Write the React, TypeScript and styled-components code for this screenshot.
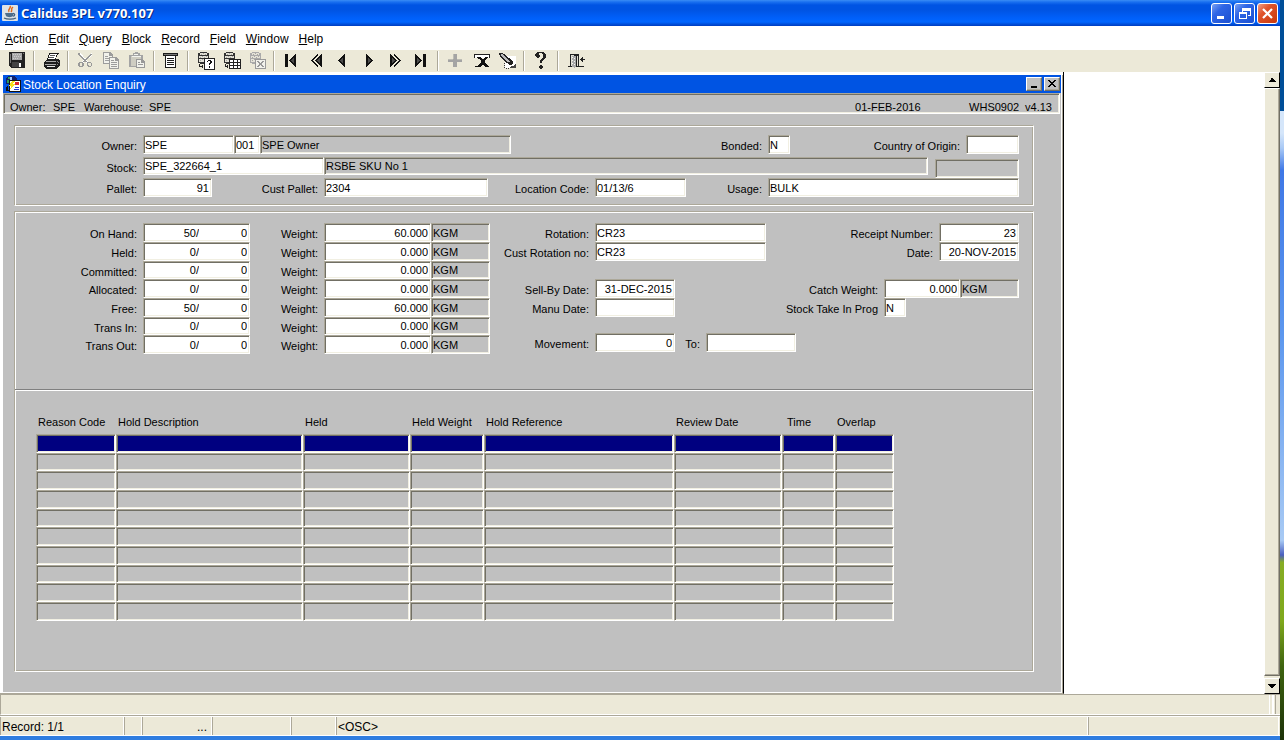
import React from "react";
import styled, { createGlobalStyle } from "styled-components";

const GlobalStyle = createGlobalStyle`
  *, *::before, *::after { box-sizing: border-box; }
  html, body { margin: 0; padding: 0; }
  body {
    font-family: "Liberation Sans", Arial, sans-serif;
    font-size: 11px;
    line-height: 14px;
    color: #000;
    background: #fff;
  }
  button, input { font: inherit; color: inherit; margin: 0; border-radius: 0; }
`;

/* ---------- shell ---------- */

const Screen = styled.div`
  display: flex;
  min-height: 100vh;
`;

const AppFrame = styled.div`
  flex: 1;
  min-width: 0;
  display: flex;
  flex-direction: column;
  border-bottom: 4px solid #2f7de0;
`;

const Desktop = styled.div`
  width: 4px;
  background: linear-gradient(
    #004e98 0 15%,
    #d5e6fa 15% 18%,
    #a9c9f5 20%,
    #3f78e6 23%,
    #5c97ee 45%,
    #a8caf4 73%,
    #4a5fc0 75%,
    #86ad24 76%,
    #7fa81c 84%,
    #3f6410 90%,
    #1c3208
  );
`;

const TitleBar = styled.header`
  display: flex;
  align-items: center;
  height: 26px;
  padding: 0 2px;
  background: linear-gradient(#3a8df5 0, #1a70f0 2px, #0054e3 5px, #0054e3 10px, #0060fa 18px, #0066ff 22px, #0050dc 24px, #003dc0 26px);
`;

const AppTitle = styled.h1`
  flex: 1;
  margin: 0 0 0 3px;
  font: bold 13px/20px "Noto Sans", "Open Sans", sans-serif;
  color: #fff;
  text-shadow: 1px 1px 0 #0a2a80;
`;

const CaptionButtons = styled.div`
  display: flex;
  gap: 2px;
`;

const CaptionButton = styled.button<{ $danger?: boolean }>`
  width: 21px;
  height: 21px;
  padding: 0;
  display: grid;
  place-items: center;
  border: 1px solid #fff;
  border-radius: 3px;
  background: ${(p) =>
    p.$danger
      ? "linear-gradient(135deg, #f0a088, #e0542c 35%, #c8380c)"
      : "linear-gradient(135deg, #7ba2f2, #2f66e6 35%, #1b4fd0)"};
`;

const MenuBar = styled.nav`
  display: flex;
  gap: 10px;
  height: 24px;
  padding: 0 5px;
  align-items: center;
  background: #fff;
`;

const MenuItem = styled.button`
  padding: 2px 0 0;
  border: 0;
  background: none;
  font-size: 12px;
  line-height: 16px;
  &::first-letter { text-decoration: underline; }
`;

const ToolBar = styled.div`
  display: flex;
  align-items: center;
  height: 22px;
  padding-left: 4px;
  background: #ece9d8;
`;

const ToolButton = styled.button`
  width: 26px;
  height: 22px;
  padding: 0;
  display: grid;
  place-items: center;
  border: 0;
  background: none;
`;

const ToolSeparator = styled.span`
  width: 8px;
  height: 20px;
  display: flex;
  justify-content: center;
  &::before {
    content: "";
    width: 2px;
    border-left: 1px solid #aca899;
    border-right: 1px solid #fff;
  }
`;

const Workspace = styled.main`
  flex: 1;
  display: grid;
  grid-template-columns: minmax(0, 1fr) 200px 16px;
  background: #fff;
`;

const ScrollBar = styled.div`
  grid-column: 3;
  display: flex;
  flex-direction: column;
  background: #ece9d8;
`;

const ScrollButton = styled.button`
  width: 16px;
  height: 16px;
  padding: 0;
  display: grid;
  place-items: center;
  background: #ece9d8;
  border: 1px solid #fff;
  border-right-color: #000;
  border-bottom-color: #000;
`;

const ScrollThumb = styled.div`
  flex: 1;
  margin-bottom: 2px;
  border: 1px solid #fff;
  border-right: 1px solid #716f64;
  border-bottom: 1px solid #716f64;
  box-shadow: inset -1px -1px #aca899;
`;

/* ---------- inner window ---------- */

const ChildWindow = styled.section`
  display: flex;
  flex-direction: column;
  padding: 3px 0 0 3px;
  border-right: 1px solid #000;
  border-bottom: 1px solid #aca899;
  background: #fff;
`;

const ChildBody = styled.div`
  flex: 1;
  display: flex;
  flex-direction: column;
  background: #c0c0c0;
  border-right: 1px solid #fff;
  border-bottom: 1px solid #fff;
  box-shadow: 1px 0 #aca899;
  margin-right: 1px;
`;

const ChildTitle = styled.div`
  display: flex;
  align-items: center;
  gap: 2px;
  height: 18px;
  padding: 0 1px 0 2px;
  background: #0054e3;
  color: #fff;
`;

const ChildHeading = styled.h2`
  flex: 1;
  margin: 0;
  padding-top: 2px;
  font-size: 12px;
  font-weight: normal;
  line-height: 16px;
`;

const ChildButton = styled.button`
  width: 16px;
  height: 14px;
  padding: 0;
  display: grid;
  place-items: center;
  background: #c0c0c0;
  border: 1px solid #fff;
  border-right-color: #716f64;
  border-bottom-color: #716f64;
  box-shadow: inset -1px -1px #aca899;
`;

const InfoBar = styled.div`
  display: flex;
  height: 21px;
  padding: 5px 7px 0 6px;
  margin-right: 1px;
  border: 1px solid #aca899;
  border-right-color: #fff;
  border-bottom-color: #fff;
  box-shadow: inset 1px 1px #716f64, inset -1px -1px #f1efe2;
  line-height: 16px;
  white-space: nowrap;
`;

const InfoText = styled.span<{ $width?: number; $end?: boolean }>`
  ${(p) => p.$width && `width: ${p.$width}px;`}
  ${(p) => p.$end && "margin-left: auto;"}
`;

const Canvas = styled.form`
  flex: 1;
  display: flex;
  flex-direction: column;
  gap: 5px;
  padding: 11px 27px 20px 11px;
`;

const Group = styled.fieldset<{ $grow?: boolean }>`
  min-width: 0;
  margin: 0;
  padding: 0;
  border: 1px solid #aca899;
  border-right-color: #fff;
  border-bottom-color: #fff;
  box-shadow: inset 1px 1px #fff, inset -1px -1px #aca899;
  ${(p) => p.$grow && "flex: 1;"}
`;

const StockPane = styled.div`
  padding: 9px 14px 8px 1px;
`;

const DetailPane = styled.div`
  display: flex;
  align-items: flex-start;
  padding: 11px 14px 35px 1px;
`;

const Rule = styled.hr`
  margin: 0;
  border: 0;
  border-top: 1px solid #808080;
  border-bottom: 1px solid #fff;
`;

const Row = styled.div<{ $height?: number }>`
  display: flex;
  align-items: flex-start;
  height: ${(p) => p.$height ?? 19}px;
`;

const RightCell = styled.div<{ $width: number; $low?: boolean }>`
  display: flex;
  flex: none;
  width: ${(p) => p.$width}px;
  margin-left: ${(p) => (p.$low ? "7px" : "0")};
  align-self: ${(p) => (p.$low ? "flex-end" : "auto")};
`;

const Label = styled.label<{ $width?: number }>`
  flex: ${(p) => (p.$width ? "none" : "1")};
  width: ${(p) => (p.$width ? p.$width + "px" : "auto")};
  padding: 4px 6px 0 0;
  text-align: right;
  white-space: nowrap;
`;

const Field = styled.input<{ $width?: number; $right?: boolean; $height?: number }>`
  flex: ${(p) => (p.$width ? "none" : "1")};
  width: ${(p) => (p.$width ? p.$width + "px" : "auto")};
  min-width: 0;
  height: ${(p) => p.$height ?? 19}px;
  padding: 1px 2px 1px 1px;
  text-align: ${(p) => (p.$right ? "right" : "left")};
  background: #fff;
  border: 1px solid #aca899;
  border-right-color: #fff;
  border-bottom-color: #fff;
  box-shadow: inset 1px 1px #716f64, inset -1px -1px #f1efe2;
  outline: none;
  &:read-only { background: #c0c0c0; }
`;

const SplitField = styled.span<{ $height: number }>`
  display: flex;
  width: 107px;
  height: ${(p) => p.$height}px;
  padding: 1px 2px 1px 1px;
  background: #fff;
  border: 1px solid #aca899;
  border-right-color: #fff;
  border-bottom-color: #fff;
  box-shadow: inset 1px 1px #716f64, inset -1px -1px #f1efe2;
`;

const SplitInput = styled.input<{ $width?: number }>`
  flex: ${(p) => (p.$width ? "none" : "1")};
  width: ${(p) => (p.$width ? p.$width + "px" : "auto")};
  min-width: 0;
  padding: 0;
  border: 0;
  background: none;
  text-align: right;
  outline: none;
`;

const Balances = styled.div`
  flex: none;
`;

const Details = styled.div`
  flex: 1;
`;

const HoldPane = styled.div`
  padding: 24px 0 0 21px;
`;

const HoldTable = styled.table`
  border-collapse: separate;
  border-spacing: 0;
  table-layout: fixed;
  width: 858px;
`;

const HoldHead = styled.th<{ $width: number; $indent?: number }>`
  width: ${(p) => p.$width}px;
  height: 19px;
  padding: 0 0 5px ${(p) => p.$indent ?? 2}px;
  font-weight: normal;
  text-align: left;
  white-space: nowrap;
`;

const HoldCell = styled.td<{ $current: boolean; $height: number }>`
  height: ${(p) => p.$height}px;
  padding: 0;
  background: ${(p) => (p.$current ? "#000080" : "#c0c0c0")};
  border: 1px solid #aca899;
  border-right-color: #fff;
  border-bottom-color: #fff;
  box-shadow: inset 1px 1px #716f64, inset -1px -1px #f1efe2;
`;

/* ---------- footer ---------- */

const MessageBar = styled.div`
  display: flex;
  height: 21px;
  padding-right: 4px;
  background: #ece9d8;
  border-top: 1px solid #aca899;
  border-left: 1px solid #aca899;
  border-bottom: 1px solid #fff;
`;

const MessageText = styled.output`
  flex: 1;
  margin-right: 2px;
  border-right: 1px solid #fff;
`;

const MessageGrip = styled.span`
  width: 4px;
  border-left: 2px solid #fff;
  border-right: 1px solid #aca899;
`;

const StatusBar = styled.footer`
  display: flex;
  height: 21px;
  padding-right: 1px;
  background: #ece9d8;
  border-top: 1px solid #aca899;
  border-bottom: 1px solid #fff;
  box-shadow: inset 0 1px #fff;
`;

const StatusCell = styled.span<{ $width?: number; $right?: boolean }>`
  flex: ${(p) => (p.$width ? "none" : "1")};
  width: ${(p) => (p.$width ? p.$width + "px" : "auto")};
  margin-top: 1px;
  padding: 0 4px 0 1px;
  font-size: 12px;
  line-height: 20px;
  text-align: ${(p) => (p.$right ? "right" : "left")};
  border-left: 1px solid #aca899;
  border-right: 1px solid #fff;
`;

/* ---------- icons ---------- */

const Glyph = ({ size = 20, children }: { size?: number; children: React.ReactNode }) => (
  <svg width={size} height={size} viewBox={`0 0 ${size} ${size}`} shapeRendering="crispEdges" aria-hidden="true">
    {children}
  </svg>
);

const SaveIcon = () => (
  <Glyph>
    <path d="M2 1h16v16H4l-2-2z" fill="#222" />
    <path d="M5 2h10v7H5z" fill="#a8a8a8" />
    <path d="M6 3h1v1H6zM8 3h1v1H8zM10 3h1v1h-1zM12 3h1v1h-1zM7 5h1v1H7zM9 5h1v1H9zM11 5h1v1h-1zM13 5h1v1h-1zM6 7h1v1H6zM8 7h1v1H8zM10 7h1v1h-1z" fill="#ccc" />
    <path d="M16 2h1v1h-1zM3 3h1v9H3z" fill="#777" />
    <path d="M5 11h7v5H5z" fill="#444" />
    <path d="M12 12h2v4h-2z" fill="#fff" />
  </Glyph>
);

const PrintIcon = () => (
  <Glyph>
    <g transform="translate(1 1)">
      <path d="M7 1h10v1h-1v1h-1v2h-1v2h3v1h1v6h-1v1h-1v1h-1v1H4v-1H3v-1H2v-5h1V9h1V8h1V6h1V3h1z" fill="#1c1c1c" />
      <path d="M8 2h7l-2 5H6z" fill="#fff" />
      <path d="M8 3h5v1H8zM7 5h5v1H7z" fill="#555" />
      <path d="M4 9h10v1H4zM3 12h11v1H3z" fill="#aaa" />
      <path d="M5 14h8v1H5z" fill="#e8e8e8" />
      <path d="M15 9h1v1h-1zM15 12h1v1h-1zM16 10h1v1h-1z" fill="#888" />
    </g>
  </Glyph>
);

const CutIcon = () => (
  <Glyph>
    <path d="M4 2l9 10M17 3L7 12" stroke="#fff" strokeWidth="2" fill="none" />
    <path d="M3 2h2v2h1v1h1v1h1v1h1v1h1v1h1v1h1v1h-2v-1H9V9H8V8H7V7H6V6H5V5H4V4H3zM15 3h2v1h-1v1h-1v1h-1v1h-1v1h-1v1h-1v1h-1v1H8v-1h1V9h1V8h1V7h1V6h1V5h1V4h1z" fill="#999" />
    <path d="M4 11h4v1h1v3H8v1H4v-1H3v-3h1zM5 12v3h2v-3zM12 11h4v1h1v3h-1v1h-3v-1h-1zM13 12v2h1v1h2v-3z" fill="#999" fillRule="evenodd" />
  </Glyph>
);

const CopyIcon = () => (
  <Glyph>
    <path d="M2 1h7l3 3v9H2z" fill="#9c9c9c" />
    <path d="M3 2h5v3h3v7H3z" fill="#f2f2ec" />
    <path d="M4 5h3v1H4zM4 7h4v1H4zM4 9h4v1H4z" fill="#a0a0a0" />
    <path d="M8 6h7l3 3v9H8z" fill="#9c9c9c" />
    <path d="M9 7h5v3h3v7H9z" fill="#f2f2ec" />
    <path d="M10 9h3v1h-3zM10 11h6v1h-6zM10 13h6v1h-6zM10 15h6v1h-6z" fill="#9c9c9c" />
  </Glyph>
);

const PasteIcon = () => (
  <Glyph>
    <path d="M2 4h4V2h2V1h3v1h2v2h3v12H2z" fill="#a4a4a4" />
    <path d="M4 5h10v10H4z" fill="#cfcdc2" />
    <path d="M7 3h4v1H7zM5 5h9v1H5z" fill="#f4f4f0" />
    <path d="M9 8h6l3 3v6H9z" fill="#999" />
    <path d="M10 9h4v3h3v4h-7z" fill="#f2f2ec" />
    <path d="M11 11h2v1h-2zM11 13h5v1h-5z" fill="#999" />
  </Glyph>
);

const ListIcon = () => (
  <Glyph>
    <path d="M2 2h15v3H2z" fill="#1c1c1c" />
    <path d="M3 3h13v1H3z" fill="#777" />
    <path d="M4 5h11v12H4z" fill="#1c1c1c" />
    <path d="M5 5h9v11H5z" fill="#fff" />
    <path d="M6 7h7v1H6zM6 9h7v1H6zM6 11h7v1H6zM6 13h7v1H6z" fill="#1c1c1c" />
  </Glyph>
);

const Cylinder = ({ ink }: { ink: string }) => (
  <>
    <path d="M5 1h7v1h2v10h-2v1H5v-1H3V2h2z" fill={ink} />
    <path d="M5 2h7v2H5zM4 5h9v2H4zM4 8h9v3H4z" fill="#e4e2d8" />
    <path d="M6 3h1v1H6zM8 2h1v1H8zM10 3h1v1h-1zM5 6h1v1H5zM7 5h1v1H7zM9 6h1v1H9zM11 5h1v1h-1zM5 9h1v1H5zM7 8h1v1H7zM9 9h1v1H9z" fill="#a8a8a0" />
  </>
);

const EnterQueryIcon = () => (
  <Glyph>
    <Cylinder ink="#333" />
    <path d="M4 13h1v2h2v-1h1v3H7v-1H4z" fill="#222" />
    <path d="M9 7h11v12H9z" fill="#222" />
    <path d="M10 8h9v10h-9z" fill="#fff" />
    <path d="M12 10h1V9h3v1h1v2h-1v1h-1v1h-1v-2h1v-2h-2v1h-1zM14 15h1v2h-1z" fill="#111" />
  </Glyph>
);

const ExecuteQueryIcon = () => (
  <Glyph>
    <Cylinder ink="#333" />
    <path d="M4 13h1v2h1v-1h1v3H6v-1H4z" fill="#222" />
    <path d="M8 8h12v10H8z" fill="#222" />
    <path d="M9 9h3v2H9zM13 9h3v2h-3zM17 9h2v2h-2zM9 12h3v2H9zM13 12h3v2h-3zM17 12h2v2h-2zM9 15h3v2H9zM13 15h3v2h-3zM17 15h2v2h-2z" fill="#fff" />
  </Glyph>
);

const CancelQueryIcon = () => (
  <Glyph>
    <Cylinder ink="#aaa" />
    <path d="M8 8h11v10H8z" fill="#999" />
    <path d="M9 9h9v8H9z" fill="#f2f2ec" />
    <path d="M10 10h2v1h1v1h1v-1h1v-1h2v1h-1v1h-1v2h1v1h1v1h-2v-1h-1v-1h-1v1h-1v1h-2v-1h1v-1h1v-2h-1v-1h-1z" fill="#999" />
  </Glyph>
);

const FirstIcon = () => (
  <Glyph>
    <path d="M4 3h3v13H4z" fill="#111" />
    <path d="M15 3v13L8 9.500z" fill="#111" />
    <path d="M13 7v5l-3-2.500z" fill="#4c4c4c" />
  </Glyph>
);

const RewindIcon = () => (
  <Glyph>
    <path d="M10 3h1v2L6 9.500l5 4.500v2h-1L4 9.500z" fill="#111" />
    <path d="M15 3v13L8 9.500z" fill="#111" />
    <path d="M13 7v5l-3-2.500z" fill="#4c4c4c" />
  </Glyph>
);

const PreviousIcon = () => (
  <Glyph>
    <path d="M12 3v13L5 9.500z" fill="#111" />
    <path d="M10 7v5L7 9.500z" fill="#4c4c4c" />
  </Glyph>
);

const NextIcon = () => (
  <Glyph>
    <path d="M7 3v13l7-6.500z" fill="#111" />
    <path d="M9 7v5l3-2.500z" fill="#4c4c4c" />
  </Glyph>
);

const ForwardIcon = () => (
  <Glyph>
    <path d="M10 3H9v2l5 4.500L9 14v2h1l6-6.500z" fill="#111" />
    <path d="M5 3v13l7-6.500z" fill="#111" />
    <path d="M7 7v5l3-2.500z" fill="#4c4c4c" />
  </Glyph>
);

const LastIcon = () => (
  <Glyph>
    <path d="M12 3h3v13h-3z" fill="#111" />
    <path d="M4 3v13l7-6.500z" fill="#111" />
    <path d="M6 7v5l3-2.500z" fill="#4c4c4c" />
  </Glyph>
);

const InsertIcon = () => (
  <Glyph>
    <path d="M8 3h4v5h5v3h-5v5H8v-5H3V8h5z" fill="#a4a4a4" />
    <path d="M8 3h1v5H8zM3 8h5v1H3zM12 8h5v1h-5z" fill="#bcbcb4" />
  </Glyph>
);

const DeleteIcon = () => (
  <Glyph>
    <g transform="translate(1 0)">
      <path d="M2 3h16v4h-1V4H3v3H2z" fill="#222" />
      <path d="M3 4h14v3H3z" fill="#fff" />
      <path d="M5 6h4v1h1v1h2V7h1V6h3v1h-1v1h-1v1h-1v3h1v1h1v1h1v2h-3v-1h-1v-1h-2v1H9v1H5v-1h1v-1h1v-1h1v-1h1V9H8V8H6V7H5z" fill="#111" />
      <path d="M3 15h3v1H3zM15 15h2v1h-2z" fill="#111" />
    </g>
  </Glyph>
);

const ClearIcon = () => (
  <Glyph>
    <path d="M8 5h11v12H8z" fill="#fff" />
    <path d="M7 12h1v1H7zM7 14h1v1H7zM7 16h1v1H7zM9 17h1v1H9zM11 17h1v1h-1z" fill="#333" />
    <path d="M19 13v4h-6v-1h1v-1h3v-1h1v-1z" fill="#444" />
    <path d="M2 2h4v1h2v1h1v1h1v1h1v1h2v1h1v1h1v1h1v3h-1v1h-3v-1h-1v-1H9v-1H8v-1H7V9H6V8H5V7H4V6H3V4H2z" fill="#222" />
    <path d="M4 3h2v1h1v1h1v1h1v1h1v1h1v1h1v1h1v1h-3v-1H9V9H8V8H7V7H6V6H5V5H4z" fill="#bbb" />
  </Glyph>
);

const HelpIcon = () => (
  <Glyph>
    <path d="M5 2h1V1h7v1h1v1h1v4h-1v1h-1v1h-1v1h-1v2H9V9h1V8h1V7h1V3h-1V2H8v2h1v2H8v1H6V6H5V5H4V3h1zM9 14h2v1h1v2h-1v1H9v-1H8v-2h1z" fill="#222" />
  </Glyph>
);

const ExitIcon = () => (
  <Glyph>
    <g transform="translate(1 0)">
      <path d="M4 3h9v12h5v1H9v1H8v-1H2v-1h2z" fill="#222" />
      <path d="M5 4h3v11H5zM11 5h1v10h-1z" fill="#e2e0d4" />
      <path d="M6 5h4v11H9v1H8v-1H6z" fill="#aaa" />
      <path d="M6 6h1v1H6zM8 7h1v1H8zM6 9h1v1H6zM8 10h1v1H8zM6 12h1v1H6zM8 13h1v1H8z" fill="#f4f4ee" />
      <path d="M14 8h1V7h1V6h1v2h2v1h-2v2h-1v-1h-1V9h-1z" fill="#222" />
    </g>
  </Glyph>
);

const JavaIcon = () => (
  <svg width="16" height="16" viewBox="0 0 16 16" aria-hidden="true">
    <rect width="16" height="16" rx="1" fill="#dfe3e6" />
    <path d="M8 1c2 2-3 3-1 6M11 2c-3 2 0 3-2 5" stroke="#e06a1c" strokeWidth="1.500" fill="none" />
    <path d="M3 8h8v3c-1 1.500-6 1.500-7 0z" fill="#4f6f8c" />
    <path d="M11 8.500c2.500 0 2 2.500 0 2.700M2 13c3 1.500 9 1.500 12 0" stroke="#44617c" strokeWidth="1.300" fill="none" />
  </svg>
);

const FormIcon = () => (
  <Glyph size={16}>
    <path d="M3 0h6l3 3v5H1V2z" fill="#10206a" />
    <path d="M3 1h2v2H3zM2 4h2v3H2z" fill="#2f9a5a" />
    <path d="M5 1h2v3H5z" fill="#9fc4ff" />
    <path d="M4 4h12v12H4z" fill="#111" />
    <path d="M5 5h10v10H5z" fill="#fff" />
    <path d="M10 6h4v3h-4z" fill="#e0242c" />
    <path d="M10 11h4v1h-4zM9 13h5v1H9z" fill="#2438d0" />
    <path d="M7 5h3L8 8h2l-5 6 1-4H4z" fill="#f5e020" />
    <path d="M2 10h1v4h2v1H1v-4h1z" fill="#111" />
  </Glyph>
);

const MinimiseGlyph = () => (
  <Glyph size={15}><path d="M3 10h7v3H3z" fill="#fff" /></Glyph>
);
const RestoreGlyph = () => (
  <Glyph size={15}>
    <path d="M5 2h9v8h-3V9h2V5H6v1H5zM2 6h8v7H2zM3 8v4h6V8z" fill="#fff" fillRule="evenodd" />
  </Glyph>
);
const CloseGlyph = () => (
  <svg width="15" height="15" viewBox="0 0 15 15" aria-hidden="true">
    <path d="M3 3l9 9M12 3l-9 9" stroke="#fff" strokeWidth="2.200" />
  </svg>
);

const toolGroups: [string, React.FC][][] = [
  [["Save", SaveIcon]],
  [["Print", PrintIcon]],
  [["Cut", CutIcon], ["Copy", CopyIcon], ["Paste", PasteIcon]],
  [["List", ListIcon]],
  [["Enter Query", EnterQueryIcon], ["Execute Query", ExecuteQueryIcon], ["Cancel Query", CancelQueryIcon]],
  [
    ["First", FirstIcon],
    ["Previous Block", RewindIcon],
    ["Previous Record", PreviousIcon],
    ["Next Record", NextIcon],
    ["Next Block", ForwardIcon],
    ["Last", LastIcon],
  ],
  [["Insert", InsertIcon], ["Delete", DeleteIcon], ["Clear", ClearIcon]],
  [["Help", HelpIcon]],
  [["Exit", ExitIcon]],
];

const menus = ["Action", "Edit", "Query", "Block", "Record", "Field", "Window", "Help"];

const balances = [
  { name: "On Hand:", qty: "50/", weight: "60.000" },
  { name: "Held:", qty: "0/", weight: "0.000" },
  { name: "Committed:", qty: "0/", weight: "0.000" },
  { name: "Allocated:", qty: "0/", weight: "0.000" },
  { name: "Free:", qty: "50/", weight: "60.000" },
  { name: "Trans In:", qty: "0/", weight: "0.000" },
  { name: "Trans Out:", qty: "0/", weight: "0.000" },
];

const holdColumns = [
  { name: "Reason Code", width: 80 },
  { name: "Hold Description", width: 187 },
  { name: "Held", width: 107 },
  { name: "Held Weight", width: 74 },
  { name: "Hold Reference", width: 190 },
  { name: "Review Date", width: 108 },
  { name: "Time", width: 53, indent: 5 },
  { name: "Overlap", width: 59 },
];

export default function App() {
  return (
    <Screen>
      <GlobalStyle />
      <AppFrame>
        <TitleBar>
          <JavaIcon />
          <AppTitle>Calidus 3PL v770.107</AppTitle>
          <CaptionButtons>
            <CaptionButton aria-label="Minimise"><MinimiseGlyph /></CaptionButton>
            <CaptionButton aria-label="Restore"><RestoreGlyph /></CaptionButton>
            <CaptionButton aria-label="Close" $danger><CloseGlyph /></CaptionButton>
          </CaptionButtons>
        </TitleBar>
        <MenuBar>
          {menus.map((m) => <MenuItem key={m}>{m}</MenuItem>)}
        </MenuBar>
        <ToolBar role="toolbar">
          {toolGroups.map((group, i) => (
            <React.Fragment key={i}>
              {i > 0 && <ToolSeparator />}
              {group.map(([name, Icon]) => (
                <ToolButton key={name} aria-label={name}><Icon /></ToolButton>
              ))}
            </React.Fragment>
          ))}
        </ToolBar>

        <Workspace>
          <ChildWindow>
            <ChildBody>
              <ChildTitle>
                <FormIcon />
                <ChildHeading>Stock Location Enquiry</ChildHeading>
                <ChildButton aria-label="Minimise form">
                  <Glyph size={12}><path d="M3 8h6v2H3z" /></Glyph>
                </ChildButton>
                <ChildButton aria-label="Close form">
                  <Glyph size={12}>
                    <path d="M2 2h2v1h1v1h2V3h1V2h2v1H9v1H8v1H7v1h1v1h1v1h1v1H8V8H7V7H5v1H4v1H2V8h1V7h1V6h1V5H4V4H3V3H2z" />
                  </Glyph>
                </ChildButton>
              </ChildTitle>
              <InfoBar>
                <InfoText $width={43}>Owner:</InfoText>
                <InfoText $width={31}>SPE</InfoText>
                <InfoText $width={65}>Warehouse:</InfoText>
                <InfoText>SPE</InfoText>
                <InfoText $end $width={114}>01-FEB-2016</InfoText>
                <InfoText $width={56}>WHS0902</InfoText>
                <InfoText>v4.13</InfoText>
              </InfoBar>

              <Canvas>
                <Group>
                  <StockPane>
                    <Row $height={22}>
                      <Label htmlFor="owner" $width={127}>Owner:</Label>
                      <Field id="owner" $width={91} defaultValue="SPE" />
                      <Field aria-label="Owner site" $width={26} defaultValue="001" />
                      <Field aria-label="Owner name" $width={251} defaultValue="SPE Owner" readOnly />
                      <Label htmlFor="bonded">Bonded:</Label>
                      <RightCell $width={251}>
                        <Field id="bonded" $width={22} defaultValue="N" />
                        <Label htmlFor="origin">Country of Origin:</Label>
                        <Field id="origin" $width={53} />
                      </RightCell>
                    </Row>
                    <Row $height={21}>
                      <Label htmlFor="stock" $width={127}>Stock:</Label>
                      <Field id="stock" $width={181} $height={18} defaultValue="SPE_322664_1" />
                      <Field aria-label="Stock description" $height={18} defaultValue="RSBE SKU No 1" readOnly />
                      <RightCell $width={84} $low>
                        <Field aria-label="Origin name" readOnly />
                      </RightCell>
                    </Row>
                    <Row>
                      <Label htmlFor="pallet" $width={127}>Pallet:</Label>
                      <Field id="pallet" $width={69} $right defaultValue="91" />
                      <Label htmlFor="custPallet" $width={112}>Cust Pallet:</Label>
                      <Field id="custPallet" $width={164} defaultValue="2304" />
                      <Label htmlFor="location" $width={107}>Location Code:</Label>
                      <Field id="location" $width={91} defaultValue="01/13/6" />
                      <Label htmlFor="usage">Usage:</Label>
                      <RightCell $width={251}>
                        <Field id="usage" defaultValue="BULK" />
                      </RightCell>
                    </Row>
                  </StockPane>
                </Group>

                <Group $grow>
                  <DetailPane>
                    <Balances>
                      {balances.map((b, i) => {
                        const height = i % 3 === 2 ? 18 : 19;
                        return (
                          <Row key={b.name} $height={height}>
                            <Label htmlFor={`qty${i}`} $width={127}>{b.name}</Label>
                            <SplitField $height={height}>
                              <SplitInput id={`qty${i}`} $width={54} defaultValue={b.qty} />
                              <SplitInput aria-label={`${b.name} units`} defaultValue="0" />
                            </SplitField>
                            <Label htmlFor={`weight${i}`} $width={74}>Weight:</Label>
                            <Field id={`weight${i}`} $width={107} $height={height} $right defaultValue={b.weight} />
                            <Field aria-label="Weight unit" $width={59} $height={height} defaultValue="KGM" readOnly />
                          </Row>
                        );
                      })}
                    </Balances>
                    <Details>
                      <Row>
                        <Label htmlFor="rotation" $width={105}>Rotation:</Label>
                        <Field id="rotation" $width={171} defaultValue="CR23" />
                        <Label htmlFor="receipt">Receipt Number:</Label>
                        <Field id="receipt" $width={80} $right defaultValue="23" />
                      </Row>
                      <Row $height={37}>
                        <Label htmlFor="custRotation" $width={105}>Cust Rotation no:</Label>
                        <Field id="custRotation" $width={171} defaultValue="CR23" />
                        <Label htmlFor="receiptDate">Date:</Label>
                        <Field id="receiptDate" $width={80} $right defaultValue="20-NOV-2015" />
                      </Row>
                      <Row>
                        <Label htmlFor="sellBy" $width={105}>Sell-By Date:</Label>
                        <Field id="sellBy" $width={80} $right defaultValue="31-DEC-2015" />
                        <Label htmlFor="catchWeight">Catch Weight:</Label>
                        <RightCell $width={135}>
                          <Field id="catchWeight" $width={76} $right defaultValue="0.000" />
                          <Field aria-label="Catch weight unit" $width={59} defaultValue="KGM" readOnly />
                        </RightCell>
                      </Row>
                      <Row $height={35}>
                        <Label htmlFor="manuDate" $width={105}>Manu Date:</Label>
                        <Field id="manuDate" $width={80} />
                        <Label htmlFor="stockTake">Stock Take In Prog</Label>
                        <RightCell $width={135}>
                          <Field id="stockTake" $width={22} defaultValue="N" />
                        </RightCell>
                      </Row>
                      <Row>
                        <Label htmlFor="movement" $width={105}>Movement:</Label>
                        <Field id="movement" $width={80} $right defaultValue="0" />
                        <Label htmlFor="movementTo" $width={31}>To:</Label>
                        <Field id="movementTo" $width={90} />
                      </Row>
                    </Details>
                  </DetailPane>
                  <Rule />
                  <HoldPane>
                    <HoldTable>
                      <thead>
                        <tr>
                          {holdColumns.map((c) => (
                            <HoldHead key={c.name} scope="col" $width={c.width} $indent={c.indent}>{c.name}</HoldHead>
                          ))}
                        </tr>
                      </thead>
                      <tbody>
                        {Array.from({ length: 10 }, (_, r) => (
                          <tr key={r}>
                            {holdColumns.map((c) => (
                              <HoldCell key={c.name} $current={r === 0} $height={r % 3 === 1 ? 18 : 19} />
                            ))}
                          </tr>
                        ))}
                      </tbody>
                    </HoldTable>
                  </HoldPane>
                </Group>
              </Canvas>
            </ChildBody>
          </ChildWindow>
          <ScrollBar>
            <ScrollButton aria-label="Scroll up">
              <Glyph size={10}><path d="M4 3h2v1h1v1h1v1h1v1H2V6h1V5h1z" /></Glyph>
            </ScrollButton>
            <ScrollThumb />
            <ScrollButton aria-label="Scroll down">
              <Glyph size={10}><path d="M1 3h8v1H8v1H7v1H6v1H4V6H3V5H2V4H1z" /></Glyph>
            </ScrollButton>
          </ScrollBar>
        </Workspace>

        <MessageBar>
          <MessageText />
          <MessageGrip />
        </MessageBar>
        <StatusBar>
          <StatusCell $width={124}>Record: 1/1</StatusCell>
          <StatusCell $width={18} />
          <StatusCell $width={70} $right>...</StatusCell>
          <StatusCell $width={79} />
          <StatusCell $width={45} />
          <StatusCell>&lt;OSC&gt;</StatusCell>
          <StatusCell $width={191} />
        </StatusBar>
      </AppFrame>
      <Desktop />
    </Screen>
  );
}
